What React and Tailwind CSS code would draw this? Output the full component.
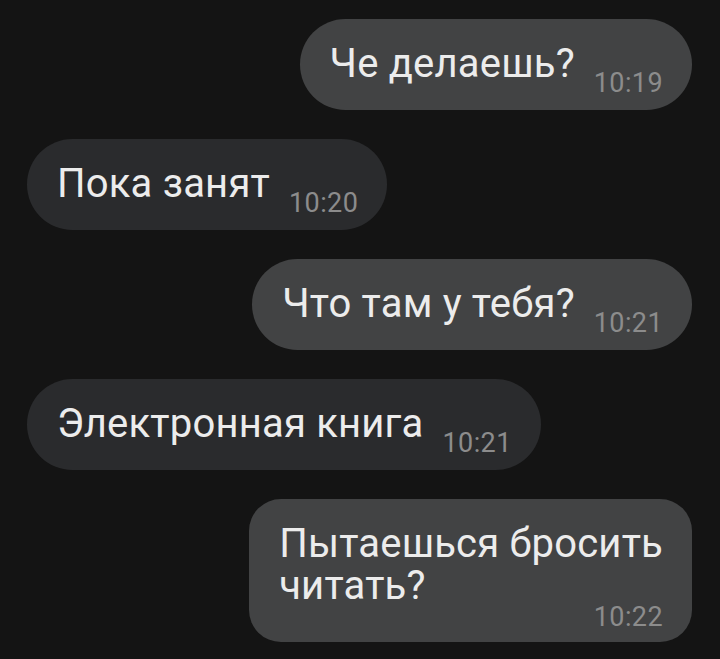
const messages = [
  { id: 1, out: true, text: 'Че делаешь?', time: '10:19' },
  { id: 2, out: false, text: 'Пока занят', time: '10:20' },
  { id: 3, out: true, text: 'Что там у тебя?', time: '10:21' },
  { id: 4, out: false, text: 'Электронная книга', time: '10:21' },
  { id: 5, out: true, text: ['Пытаешься бросить', 'читать?'], time: '10:22' },
];

const Bubble = ({ msg }) => {
  const color = msg.out ? 'bg-[#424344]' : 'bg-[#2a2b2d]';

  // two-line message: time sits under the text, right aligned
  if (Array.isArray(msg.text)) {
    return (
      <div className={`${color} rounded-[32px] pl-[30px] pr-[29px] pt-[24px] pb-[12px] flex flex-col`}>
        <span className="text-[40px] leading-[42px] tracking-[0.2px] text-[#ececec]">
          {msg.text[0]}
          <br />
          {msg.text[1]}
        </span>
        <span className="self-end -mt-[3px] text-[27px] leading-[26px] tracking-[0.4px] text-[#8c8c8c]">{msg.time}</span>
      </div>
    );
  }

  return (
    <div className={`${color} rounded-full pl-[30px] pr-[29px] pt-[24px] pb-[14px] flex items-end gap-[19px]`}>
      <span className="mb-[11px] text-[40px] leading-[42px] tracking-[0.2px] text-[#ececec] whitespace-nowrap">{msg.text}</span>
      <span className="text-[27px] leading-[26px] tracking-[0.4px] text-[#8c8c8c]">{msg.time}</span>
    </div>
  );
};

const App = () => {
  return (
    <div className="w-[720px] h-[659px] bg-[#141414] overflow-hidden font-['Roboto',sans-serif] px-[27px] pt-[19px] flex flex-col gap-[29px]">
      {messages.map((msg) => (
        <div key={msg.id} className={`flex ${msg.out ? 'justify-end pr-[1px]' : 'justify-start'}`}>
          <Bubble msg={msg} />
        </div>
      ))}
    </div>
  );
};

export default App;
